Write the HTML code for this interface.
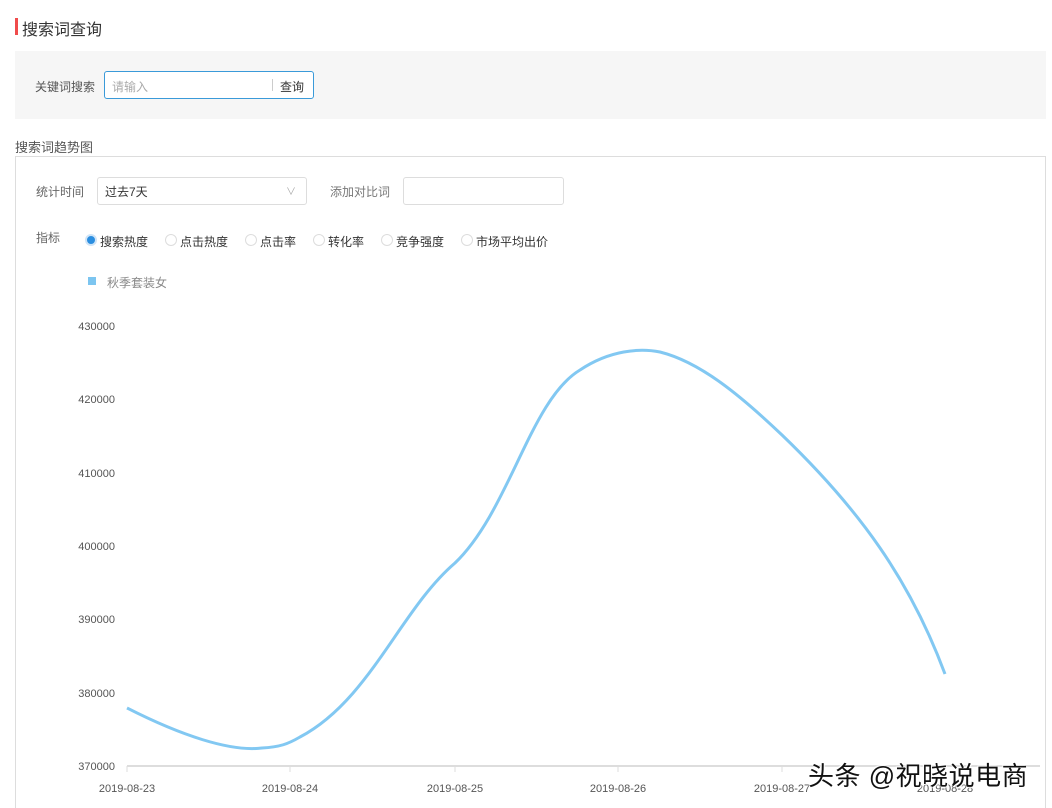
<!DOCTYPE html><html style="height:808px;overflow:hidden"><head><meta charset="utf-8"><style>
body{margin:0;width:1052px;height:808px;background:#fff;font-family:"Liberation Sans","Noto Sans CJK SC",sans-serif;position:relative;overflow:hidden;color:#333}
.a{position:absolute;white-space:nowrap}
</style></head><body>
<div class="a" style="left:15px;top:18px;width:3px;height:17px;background:#f04b4b"></div>
<div class="a" style="left:22px;top:16px;font-size:16px;color:#333">搜索词查询</div>
<div class="a" style="left:15px;top:51px;width:1031px;height:68px;background:#f6f6f6"></div>
<div class="a" style="left:35px;top:78px;font-size:12px;color:#555">关键词搜索</div>
<div class="a" style="left:104px;top:71px;width:208px;height:26px;border:1px solid #3a9ad9;border-radius:3px;background:#fff"></div>
<div class="a" style="left:112px;top:78px;font-size:12px;color:#aaa">请输入</div>
<div class="a" style="left:272px;top:79px;width:1px;height:12px;background:#ccc"></div>
<div class="a" style="left:280px;top:78px;font-size:12px;color:#333">查询</div>
<div class="a" style="left:15px;top:137px;font-size:13px;color:#555">搜索词趋势图</div>
<div class="a" style="left:15px;top:156px;width:1029px;height:651px;border:1px solid #ddd;border-bottom:none"></div>
<div class="a" style="left:36px;top:183px;font-size:12px;color:#666">统计时间</div>
<div class="a" style="left:97px;top:177px;width:208px;height:26px;border:1px solid #ddd;border-radius:3px"></div>
<div class="a" style="left:105px;top:183px;font-size:12px;color:#333">过去7天</div>
<div class="a" style="left:286px;top:183px;font-size:10px;color:#aaa">∨</div>
<div class="a" style="left:330px;top:183px;font-size:12px;color:#777">添加对比词</div>
<div class="a" style="left:403px;top:177px;width:159px;height:26px;border:1px solid #ddd;border-radius:3px"></div>
<div class="a" style="left:36px;top:229px;font-size:12px;color:#666">指标</div>
<div class="a" style="left:85px;top:234px;width:8px;height:8px;border:2px solid #cfe4f7;border-radius:50%;background:#2b8ee0;box-shadow:0 0 0 1px #2b8ee0 inset"></div>
<div class="a" style="left:100px;top:233px;font-size:12px">搜索热度</div>
<div class="a" style="left:165px;top:234px;width:10px;height:10px;border:1px solid #ddd;border-radius:50%"></div>
<div class="a" style="left:180px;top:233px;font-size:12px">点击热度</div>
<div class="a" style="left:245px;top:234px;width:10px;height:10px;border:1px solid #ddd;border-radius:50%"></div>
<div class="a" style="left:260px;top:233px;font-size:12px">点击率</div>
<div class="a" style="left:313px;top:234px;width:10px;height:10px;border:1px solid #ddd;border-radius:50%"></div>
<div class="a" style="left:328px;top:233px;font-size:12px">转化率</div>
<div class="a" style="left:381px;top:234px;width:10px;height:10px;border:1px solid #ddd;border-radius:50%"></div>
<div class="a" style="left:396px;top:233px;font-size:12px">竞争强度</div>
<div class="a" style="left:461px;top:234px;width:10px;height:10px;border:1px solid #ddd;border-radius:50%"></div>
<div class="a" style="left:476px;top:233px;font-size:12px">市场平均出价</div>
<div class="a" style="left:88px;top:277px;width:8px;height:8px;background:#7cc5f0"></div>
<div class="a" style="left:107px;top:274px;font-size:12px;color:#888">秋季套装女</div>
<svg class="a" style="left:0;top:0" width="1052" height="808">
<g font-family="Liberation Sans,sans-serif" font-size="11" fill="#555" text-anchor="end">
<text x="115" y="330">430000</text><text x="115" y="403">420000</text><text x="115" y="477">410000</text><text x="115" y="550">400000</text><text x="115" y="623">390000</text><text x="115" y="697">380000</text><text x="115" y="770">370000</text></g>
<line x1="127" y1="766" x2="1040" y2="766" stroke="#ddd" stroke-width="2"/>
<g stroke="#ddd"><line x1="127" y1="766" x2="127" y2="772"/><line x1="290" y1="766" x2="290" y2="772"/><line x1="455" y1="766" x2="455" y2="772"/><line x1="618" y1="766" x2="618" y2="772"/><line x1="782" y1="766" x2="782" y2="772"/><line x1="945" y1="766" x2="945" y2="772"/></g>
<g font-family="Liberation Sans,sans-serif" font-size="11" fill="#555" text-anchor="middle">
<text x="127" y="792">2019-08-23</text><text x="290" y="792">2019-08-24</text><text x="455" y="792">2019-08-25</text><text x="618" y="792">2019-08-26</text><text x="782" y="792">2019-08-27</text><text x="945" y="792">2019-08-28</text></g>
<path d="M127,708 C180,735 230,752 262,748 C280,747 288,744 300,737 C370,700 400,610 455,563 C510,510 530,400 580,370 C610,350 640,348 660,352 C700,362 740,395 782,435 C860,510 910,580 945,674" fill="none" stroke="#82c8f2" stroke-width="3"/>
</svg>
<div class="a" style="left:808px;top:756px;font-size:26px;letter-spacing:0.5px;color:#111;text-shadow:0 0 2px #fff,1px 1px 1px #fff,-1px -1px 1px #fff">头条 @祝晓说电商</div>
</body></html>
